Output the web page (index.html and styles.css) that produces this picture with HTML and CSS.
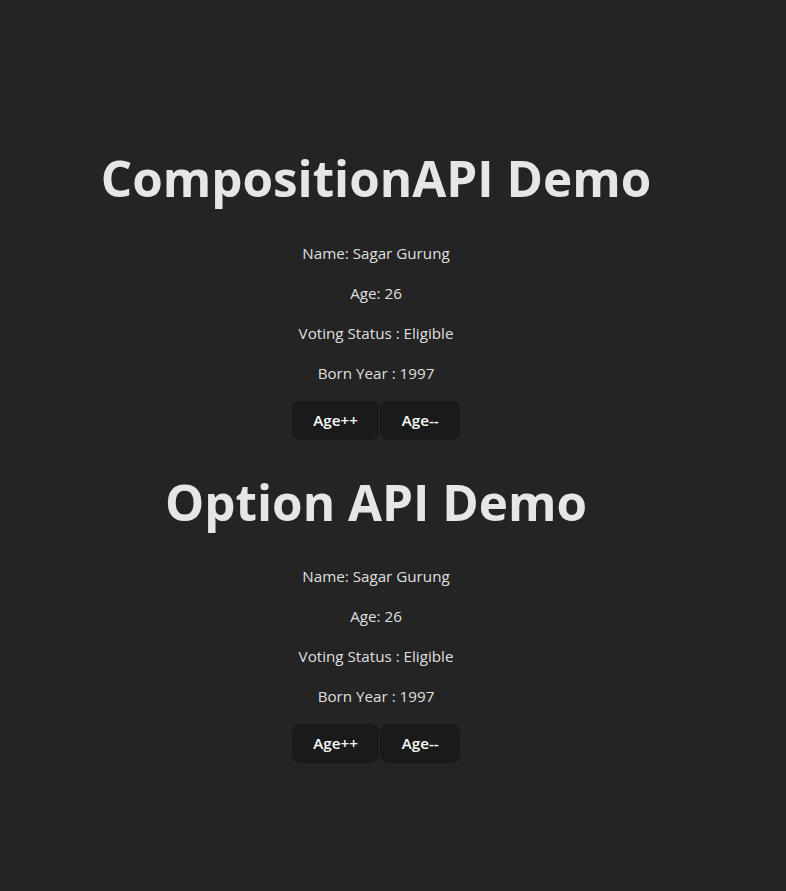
FILE: index.html
```html
<!DOCTYPE html>
<html lang="en">
<head>
<meta charset="UTF-8">
<title>Vue Demo</title>
<link rel="stylesheet" href="styles.css">
</head>
<body>
<div class="app">
  <section class="demo">
    <h1 class="title">CompositionAPI Demo</h1>
    <p class="line">Name: Sagar Gurung</p>
    <p class="line">Age: 26</p>
    <p class="line">Voting Status : Eligible</p>
    <p class="line">Born Year : 1997</p>
    <div class="actions"><button class="btn">Age++</button><button class="btn">Age--</button></div>
  </section>
  <section class="demo">
    <h1 class="title">Option API Demo</h1>
    <p class="line">Name: Sagar Gurung</p>
    <p class="line">Age: 26</p>
    <p class="line">Voting Status : Eligible</p>
    <p class="line">Born Year : 1997</p>
    <div class="actions"><button class="btn">Age++</button><button class="btn">Age--</button></div>
  </section>
</div>
</body>
</html>
```
FILE: styles.css
```css
html, body {
  margin: 0;
  background: #242424;
}
body {
  font-family: "Open Sans", "Noto Sans", sans-serif;
  color: rgba(255, 255, 255, 0.87);
  line-height: 24px;
  font-size: 15.2px;
  min-height: 100vh;
  display: flex;
  align-items: center;
  justify-content: center;
  padding-right: 34px;
  padding-bottom: 12px;
  box-sizing: border-box;
}
.app {
  padding: 32px;
  text-align: center;
}
.title {
  font-size: 49.4px;
  line-height: 56.3px;
  font-weight: 700;
  margin: 34.3px 0;
  color: #e6e6e6;
}
.line {
  margin: 16px 0;
}
.actions {
  display: flex;
  justify-content: center;
  gap: 1px;
}
.btn {
  font-family: inherit;
  font-size: 15.2px;
  line-height: 21px;
  font-weight: 600;
  color: #ffffff;
  background: #1a1a1a;
  border: 1px solid transparent;
  border-radius: 8px;
  padding: 8px 20.4px;
  cursor: pointer;
}
```
